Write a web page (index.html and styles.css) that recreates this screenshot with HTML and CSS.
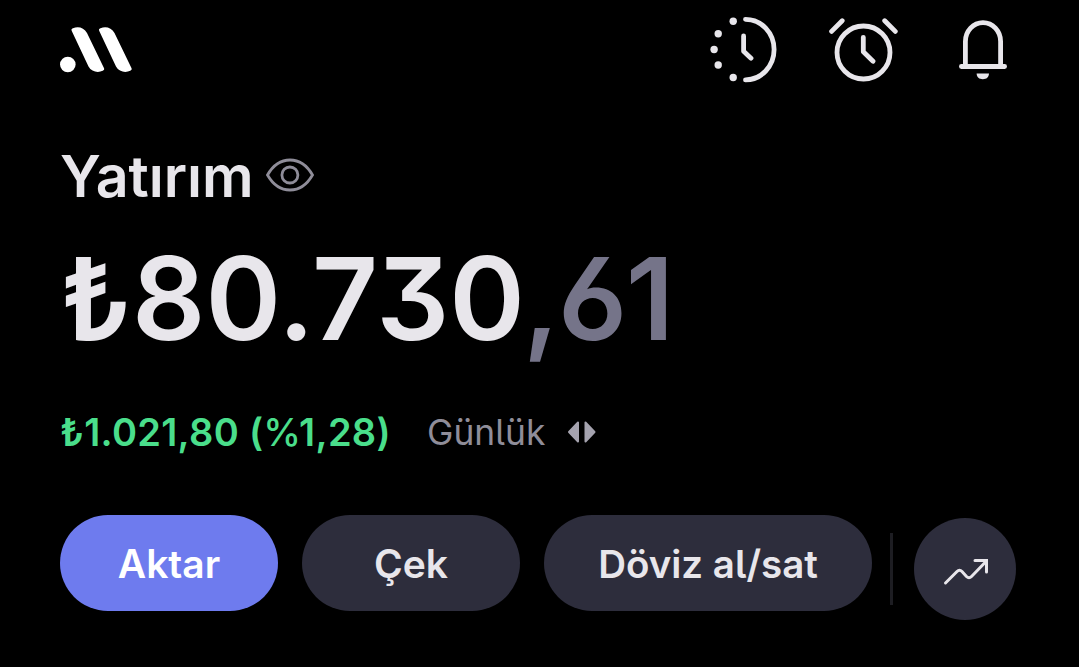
FILE: index.html
```html
<!DOCTYPE html>
<html lang="tr">
<head>
  <meta charset="UTF-8">
  <meta name="viewport" content="width=device-width, initial-scale=1.0">
  <title>Yatırım</title>
  <link rel="stylesheet" href="styles.css">
</head>
<body>
  <header class="header">
    <svg class="logo" width="72" height="46" viewBox="0 0 72 46">
      <circle cx="7.8" cy="37.5" r="7.8"/>
      <path d="M12 4.5 C11 2.5 11.5 2 13 1.3 C18 -1 24 .5 27 6 L43.7 40.5 C44.6 42.3 44.2 43 42.8 43.8 C38 46 31.500 45 28.500 39.500 Z"/>
      <path d="M39.500 4.500 C38.500 2.500 39 2 40.500 1.300 C45.500 -1 51.500 .5 54.500 6 L71.200 40.500 C72.100 42.300 71.700 43 70.300 43.800 C65.500 46 59 45 56 39.500 Z"/>
    </svg>
    <nav class="header-icons">
      <svg width="68" height="68" viewBox="0 0 68 68">
        <path class="line" d="M35.500 4.300 A28.600 30.300 0 0 1 35.500 64.900 M33.600 21 V36.200 L41 43.200"/>
        <circle cx="23.200" cy="6.300" r="3.700"/>
        <circle cx="8.200" cy="18.800" r="3.700"/>
        <circle cx="4.100" cy="34.500" r="3.700"/>
        <circle cx="8.200" cy="50" r="3.700"/>
        <circle cx="23.200" cy="62.500" r="3.700"/>
      </svg>
      <svg width="70" height="68" viewBox="0 0 70 68">
        <circle class="line" cx="34.500" cy="37.500" r="26.500"/>
        <path class="line" d="M34.300 22.300 V36.700 L44 46.200 M2.600 16.400 L13.200 5.800 M55.700 5.800 L66.300 16.400"/>
      </svg>
      <svg width="48" height="68" viewBox="0 0 48 68">
        <path class="line" d="M6.400 51 V26.500 A17.600 18.800 0 0 1 41.600 26.500 V51 M2.400 51.500 H45.600"/>
        <path d="M17.600 58.500 H30 C29.800 62.300 27.500 64.200 23.800 64.200 C20.100 64.200 17.800 62.300 17.600 58.500 Z"/>
      </svg>
    </nav>
  </header>

  <main>
    <div class="title-row">
      <h1 class="title">Yatırım</h1>
      <svg class="eye" width="50" height="36" viewBox="0 0 50 36">
        <path d="M2.500 18 C14 -2 36 -2 47.500 18 C36 38 14 38 2.500 18 Z"/>
        <circle cx="24.900" cy="18" r="8"/>
      </svg>
    </div>

    <div class="amount">₺80.730<span class="decimals">,61</span></div>

    <div class="change-row">
      <span class="change">₺1.021,80 (<span class="percent">%</span>1,28)</span>
      <span class="period">Günlük</span>
      <svg class="arrows" width="30" height="24" viewBox="0 0 30 24">
        <path d="M11 2.500 V21.500 L2 12 Z M18.500 2.500 V21.500 L27.500 12 Z"/>
      </svg>
    </div>

    <div class="actions">
      <button class="btn btn-primary">Aktar</button>
      <button class="btn">Çek</button>
      <button class="btn btn-wide">Döviz al/sat</button>
      <span class="divider"></span>
      <button class="btn-round">
        <svg width="46" height="30" viewBox="0 0 46 30">
          <path d="M2.500 26 L14 14.500 Q16.500 12 19 14.500 L23.500 19.500 Q26 22 28.500 19.500 L43 4.500 M32 3.500 H43.500 V15"/>
        </svg>
      </button>
    </div>
  </main>
</body>
</html>
```

FILE: styles.css
```css
* {
  margin: 0;
  padding: 0;
  box-sizing: border-box;
}

body {
  width: 1079px;
  height: 667px;
  overflow: hidden;
  background: #000;
  color: #e8e6eb;
  font-family: Inter, "Liberation Sans", sans-serif;
  font-feature-settings: "cv05", "cv03", "cv04", "cv09", "calt" 0;
}

.header {
  display: flex;
  justify-content: space-between;
  height: 144px;
  padding: 15px 72px 0 60px;
}

.logo {
  margin-top: 12px;
  fill: #fff;
}

.header-icons {
  display: flex;
  gap: 51px;
  fill: #e8e6eb;
}

.header-icons svg:nth-child(2) {
  margin-right: 9px;
}

.line {
  fill: none;
  stroke: #e8e6eb;
  stroke-width: 4.8;
  stroke-linecap: round;
  stroke-linejoin: round;
}

.title-row {
  display: flex;
  align-items: center;
  height: 64px;
  padding-left: 60px;
}

.title {
  width: 205px;
  font-size: 57.3px;
  font-weight: 600;
  line-height: 64px;
}

.eye {
  margin-top: -3px;
  fill: none;
  stroke: #8f8d99;
  stroke-width: 2.8;
}

.amount {
  margin-top: 31px;
  padding-left: 60px;
  font-size: 114.7px;
  font-weight: 600;
  line-height: 120px;
}

.decimals {
  margin-left: -2px;
  color: #757489;
  letter-spacing: -1.5px;
}

.change-row {
  display: flex;
  align-items: center;
  height: 40px;
  margin-top: 53px;
  padding-left: 60px;
  font-size: 38px;
}

.change {
  width: 367px;
  color: #4ade8b;
  font-weight: 600;
  letter-spacing: 0.3px;
}

.percent {
  font-weight: 500;
  letter-spacing: -2px;
}

.period {
  width: 140px;
  color: #8f8d99;
  font-size: 35.4px;
}

.arrows {
  fill: #a5a3af;
  stroke: #a5a3af;
  stroke-width: 2;
  stroke-linejoin: round;
}

.actions {
  display: flex;
  align-items: flex-start;
  margin-top: 63px;
  padding-left: 60px;
}

.btn {
  width: 218px;
  height: 96px;
  margin-right: 24px;
  padding-top: 1px;
  border: none;
  border-radius: 48px;
  background: #2d2d3c;
  color: #e8e6eb;
  font: inherit;
  font-size: 39px;
  font-weight: 600;
  font-feature-settings: inherit;
}

.btn-primary {
  background: #6e7bee;
  color: #fff;
}

.btn-wide {
  width: 328px;
  margin-right: 18px;
  padding-top: 2px;
  font-size: 38.5px;
}

.divider {
  width: 3px;
  height: 72px;
  margin-top: 18px;
  background: #1d1d22;
}

.btn-round {
  display: flex;
  align-items: center;
  justify-content: center;
  width: 102px;
  height: 102px;
  margin: 3px 0 0 21px;
  border: none;
  border-radius: 50%;
  background: #2d2d3c;
}

.btn-round svg {
  margin: 5px 0 0 2px;
  fill: none;
  stroke: #e8e6eb;
  stroke-width: 3;
  stroke-linecap: round;
}
```
